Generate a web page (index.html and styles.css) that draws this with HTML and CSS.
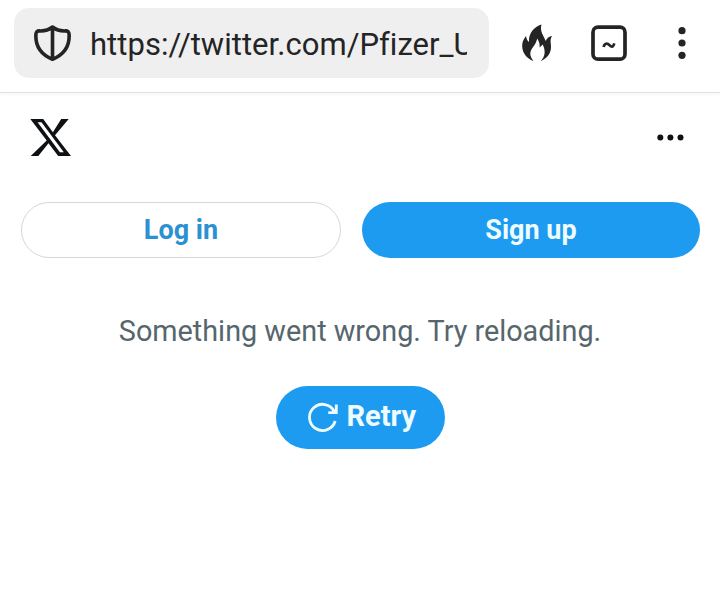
FILE: index.html
```html
<!DOCTYPE html>
<html lang="en">
<head>
<meta charset="utf-8">
<title>X</title>
<link rel="stylesheet" href="styles.css">
</head>
<body>
<header class="browser-bar">
  <div class="address">
    <svg class="shield" width="38" height="38" viewBox="0.500 -0.500 38 38"><path d="M19 2.500C15.500 5.200 11 6.700 6 6.400Q2.500 6.300 2.400 10C1.800 21 6 29.500 19 34.800C32 29.500 36.200 21 35.600 10Q35.500 6.300 32 6.400C27 6.700 22.500 5.200 19 2.500ZM19 3V34.500" fill="none" stroke="#242424" stroke-width="3.600" stroke-linejoin="round"/></svg>
    <span class="url">https://twitter.com/Pfizer_U</span>
  </div>
  <svg class="flame" width="32" height="38" viewBox="0 0 32 38"><path d="M20.500 0.500C13 3 7.500 9 8 18C6.400 16.800 5.500 15 5 12C2 15.500 1 19 1.200 22.500C1.500 29 5.500 34.500 12.500 37C9.500 33 8.500 30 10 26.500C11.500 23 15 20.500 16.200 14.500C18 17.500 19 20 18.600 23.500L21.700 20.500C25 27 24 33 19.600 37C26.500 34.500 30 29 30 23C30 18.500 28.600 16 31 12C28 12.500 26 14 24.700 17C22.500 11.500 18.500 7 20.500 0.500Z" fill="#242424"/></svg>
  <svg class="tabs" width="38" height="38" viewBox="-0.300 -0.500 38 38"><rect x="2.700" y="2.700" width="32" height="32" rx="5" fill="none" stroke="#242424" stroke-width="3.700"/><path d="M13.300 22.500C14.300 18.500 17 18.500 19 20.500S22.600 23.500 24 18.800" fill="none" stroke="#242424" stroke-width="2.700"/></svg>
  <svg class="menu" width="10" height="34" viewBox="0 0 10 34"><g fill="#242424"><circle cx="5" cy="4.700" r="3.600"/><circle cx="5" cy="17" r="3.600"/><circle cx="5" cy="29.300" r="3.600"/></g></svg>
</header>
<nav class="site-bar">
  <svg width="42" height="39" viewBox="0 0 42 39"><path fill="#0f1214" fill-rule="evenodd" d="M.3 1H13.200L22.900 14.200L31.200 1H38.700L25 17.200L41 38H28.200L18.500 25.200L8.300 38H.7L16.700 22.600ZM7.600 4.200L29.900 34.300H33.800L11.500 4.200Z"/></svg>
  <svg width="30" height="10" viewBox="0 0.500 30 10"><g fill="#0f1214"><circle cx="5.300" cy="5" r="3"/><circle cx="15.400" cy="5" r="3"/><circle cx="25.500" cy="5" r="3"/></g></svg>
</nav>
<div class="auth">
  <button class="login">Log in</button>
  <button class="signup">Sign up</button>
</div>
<main class="error">
  <p>Something went wrong. Try reloading.</p>
  <button class="retry"><svg width="32" height="32" viewBox="0 0 32 32"><path d="M28.200 20A13.100 13.100 0 1 1 27.300 10.500M29.300 3.500V11.600H21.300" fill="none" stroke="#effcff" stroke-width="2.800"/></svg><span>Retry</span></button>
</main>
</body>
</html>
```
FILE: styles.css
```css
* { box-sizing: border-box; }
body { margin: 0; background: #fff; font-family: Roboto, "Liberation Sans", sans-serif; }
svg { display: block; flex: none; }
button { font: 700 27px/32px Roboto, "Liberation Sans", sans-serif; border: 0; padding: 0; }
.browser-bar { height: 93px; padding: 8px 0 0 14px; display: flex; align-items: flex-start; border-bottom: 1px solid #e2e2e2; box-shadow: 0 1px 4px #0000000d; }
.address { width: 475px; height: 70px; border-radius: 15px; background: #efefef; display: flex; align-items: center; padding: 0 22px 0 20px; }
.shield { margin-right: 18px; }
.url { flex: 1; min-width: 0; overflow: hidden; white-space: nowrap; color: #242424; font-size: 31px; line-height: 40px; padding-top: 4px; letter-spacing: 0.03px; }
.flame { margin: 16px 0 0 32px; }
.tabs { margin: 16px 0 0 37px; }
.menu { margin: 18px 0 0 49px; }
.site-bar { display: flex; justify-content: space-between; align-items: center; height: 89px; padding: 0 35px 0 30px; }
.auth { display: grid; grid-template-columns: 320px 338px; gap: 21px; margin: 20px 20px 0 21px; }
.auth button { height: 56px; border-radius: 28px; }
.auth .login { background: #fff; border: 1px solid #cfd9de; color: #2b91d2; }
.signup { background: #1d9bf0; color: #effcff; }
.error { display: flex; flex-direction: column; align-items: center; }
.error p { margin: 55px 0 0; font-size: 28.8px; line-height: 36px; color: #56666c; white-space: nowrap; }
.retry { display: flex; align-items: center; width: 169px; height: 63px; margin-top: 37px; padding: 0 0 2px 31px; gap: 8px; border-radius: 32px; background: #1d9bf0; color: #effcff; font-size: 29px; }
.retry span { margin-top: -2px; }
```
